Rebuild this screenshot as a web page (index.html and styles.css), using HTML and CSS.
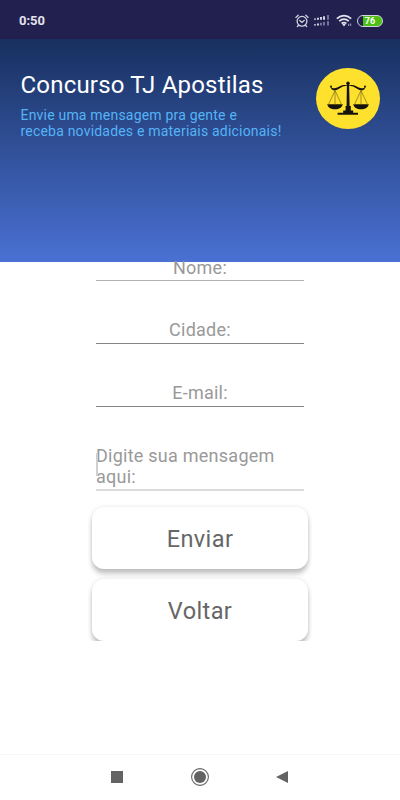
FILE: index.html
```html
<!DOCTYPE html>
<html lang="pt-BR">
<head>
  <meta charset="UTF-8">
  <meta name="viewport" content="width=device-width, initial-scale=1.0">
  <title>Concurso TJ Apostilas</title>
  <link rel="stylesheet" href="styles.css">
</head>
<body>
  <div class="status-bar">
    <span class="clock">0:50</span>
    <div class="status-icons">
      <svg class="icon-alarm" width="14" height="14" viewBox="0 0 14 14" fill="none" stroke="#d3d2df" stroke-width="1.3" stroke-linecap="round">
        <circle cx="7" cy="7.3" r="4.9"/>
        <path d="M4.8 6.5L7 8.4l2.2-1.9M.9 3.4L3.2 1.3M13.1 3.4l-2.3-2.1M3.4 11.3l-1 1.2M10.6 11.3l1 1.2"/>
      </svg>
      <svg class="icon-signal" width="17" height="13" viewBox="0 0 17 13">
        <path fill="#d3d2df" d="M0 4.5h2v1.3H0zM3 3.8h2v2H3zM6 3h2v2.8H6zM0 10.3h2v1.3H0zM3 9.6h2v2H3z"/>
        <path fill="#d3d2df" d="M9 2.2h2v3.6H9z"/>
        <path fill="#75739a" d="M13 1h2v4.8h-2zM6 8.8h2v2.8H6zM9 8h2v3.6H9zM13 7.2h2v4.4h-2z"/>
      </svg>
      <svg class="icon-wifi" width="18" height="14" viewBox="0 0 18 14" fill="none" stroke="#e4e3ec" stroke-width="1.7">
        <path d="M.8 4.7Q8 -1.6 15.2 4.7M3.2 7.2Q8 3 12.8 7.2M5.6 9.5Q8 7.6 10.4 9.5"/>
        <path d="M8 12.5L6.2 10.3Q8 9 9.8 10.3z" fill="#e4e3ec" stroke="none"/>
        <path d="M12.7 12V9.8M14.7 9.5v2.3" stroke="#aaa8c0" stroke-width="1"/>
      </svg>
      <div class="battery"><span>76</span></div>
    </div>
  </div>

  <header>
    <div class="header-text">
      <h1>Concurso TJ Apostilas</h1>
      <p>Envie uma mensagem pra gente e<br>receba novidades e materiais adicionais!</p>
    </div>
    <svg class="logo" width="64" height="61" viewBox="0 0 64 61">
      <ellipse cx="32" cy="30.5" rx="32" ry="30.5" fill="#fee12d"/>
      <g fill="#16130a">
        <circle cx="32" cy="15.2" r="1.7"/>
        <path d="M30.9 16h2.2l.5 22h1.2v4.4h2.4v2.4H42v2H21.6v-2h5.6v-2.4h2.4V38h1z"/>
        <path d="M32 18.2c-4-1-6.2.6-8.7 2.4-2.4 1.8-5.2 2.6-7.5.8l-1.6-3c3.4 3 6.6 1.7 9.5-.1 2.7-1.6 5.3-1.7 8.3-.7 3-1 5.6-.9 8.3.7 2.9 1.8 6.1 3.1 9.5.1l-1.6 3c-2.3 1.8-5.1 1-7.5-.8-2.5-1.8-4.7-3.4-8.7-2.4z"/>
        <path d="M11.2 36.3h15.6c-.6 3-3.6 5-7.8 5s-7.2-2-7.8-5zM37.2 36.3h15.6c-.6 3-3.6 5-7.8 5s-7.2-2-7.8-5z"/>
      </g>
      <path d="M19 22.5l-6.5 14M19 22.5v14M19 22.5l6.5 14M45 22.5l-6.5 14M45 22.5v14M45 22.5l6.5 14" fill="none" stroke="#8a781d" stroke-width=".8"/>
      <circle cx="15" cy="18.6" r="1" fill="#16130a"/>
      <circle cx="49" cy="18.6" r="1" fill="#16130a"/>
    </svg>
  </header>

  <main>
    <form class="contact-form">
      <div class="field field-light">Nome:</div>
      <div class="field">Cidade:</div>
      <div class="field">E-mail:</div>
      <div class="field field-message">Digite sua mensagem aqui:</div>
      <div class="buttons">
        <button type="button">Enviar</button>
        <button type="button">Voltar</button>
      </div>
    </form>
  </main>

  <nav class="nav-bar">
    <svg width="12" height="12" viewBox="0 0 12 12"><path d="M0 0h12v12H0z" fill="#636363"/></svg>
    <svg width="18" height="18" viewBox="0 0 18 18">
      <circle cx="9" cy="9" r="8.4" fill="none" stroke="#636363" stroke-width="1.1"/>
      <circle cx="9" cy="9" r="6" fill="#636363"/>
    </svg>
    <svg width="12" height="12" viewBox="0 0 12 12"><path d="M12 0v12L0 6z" fill="#636363"/></svg>
  </nav>
</body>
</html>
```

FILE: styles.css
```css
* {
  box-sizing: border-box;
}

body {
  margin: 0;
  width: 400px;
  height: 800px;
  display: flex;
  flex-direction: column;
  overflow: hidden;
  background-color: #fff;
  font-family: Roboto, sans-serif;
}

.status-bar {
  height: 39px;
  padding: 2px 17px 0 19px;
  display: flex;
  align-items: center;
  justify-content: space-between;
  background-color: #22204f;
  color: #e4e3ec;
}

.clock {
  font-size: 13px;
  font-weight: bold;
}

.status-icons {
  display: flex;
  align-items: center;
}

.icon-alarm {
  margin-right: 5px;
}

.icon-signal {
  margin-right: 5px;
}

.icon-wifi {
  margin-right: 3px;
}

.battery {
  width: 26px;
  height: 12px;
  border: 1.5px solid #d3d2df;
  border-radius: 6px;
  background: linear-gradient(to right, #22204f 5px, #4cbf12 5px) no-repeat;
  text-align: center;
  font-size: 9px;
  font-weight: bold;
  line-height: 10px;
  color: #fff;
}

header {
  height: 223px;
  padding: 29px 20px 0 20.5px;
  display: flex;
  justify-content: space-between;
  background: linear-gradient(#18305f, #4a71d3);
}

h1 {
  margin: 3px 0 0;
  font-size: 24px;
  font-weight: normal;
  line-height: 28px;
  letter-spacing: 0.2px;
  color: #fff;
}

.header-text p {
  margin: 8px 0 0;
  font-size: 14px;
  line-height: 16px;
  letter-spacing: 0.2px;
  white-space: nowrap;
  color: #55b4f6;
}

main {
  flex: 1;
  display: flex;
  justify-content: center;
}

.contact-form {
  width: 208px;
  margin-top: -6px;
}

.field {
  height: 25px;
  margin-bottom: 38px;
  border-bottom: 1px solid #858585;
  font-size: 18px;
  line-height: 22px;
  letter-spacing: 0.25px;
  text-align: center;
  color: #999;
}

.field-light {
  border-color: #b0b0b0;
  line-height: 24px;
}

.field-message {
  position: relative;
  height: 46px;
  margin-bottom: 0;
  border-bottom: 2px solid #dcdcdc;
  line-height: 21px;
  text-align: left;
}

/* text cursor */
.field-message::before {
  content: "";
  position: absolute;
  left: 0;
  top: 8px;
  width: 2px;
  height: 23px;
  background-color: #d0d0d0;
}

.buttons {
  height: 150px;
  margin: 0 -16px;
  padding: 16px 12px 0;
  display: flex;
  flex-direction: column;
  gap: 10px;
  overflow: hidden;
}

button {
  flex: none;
  height: 62px;
  padding: 2px 0 0;
  border: none;
  border-radius: 12px;
  background-color: #fff;
  box-shadow: 0 5px 5px rgba(0, 0, 0, 0.22), 0 0 4px rgba(0, 0, 0, 0.1);
  font-family: inherit;
  font-size: 23.5px;
  letter-spacing: 0.4px;
  color: #666;
}

.nav-bar {
  height: 46px;
  padding: 0 112px 1px 111px;
  border-top: 1px solid #f7f7f7;
  display: flex;
  align-items: center;
  justify-content: space-between;
}
```
